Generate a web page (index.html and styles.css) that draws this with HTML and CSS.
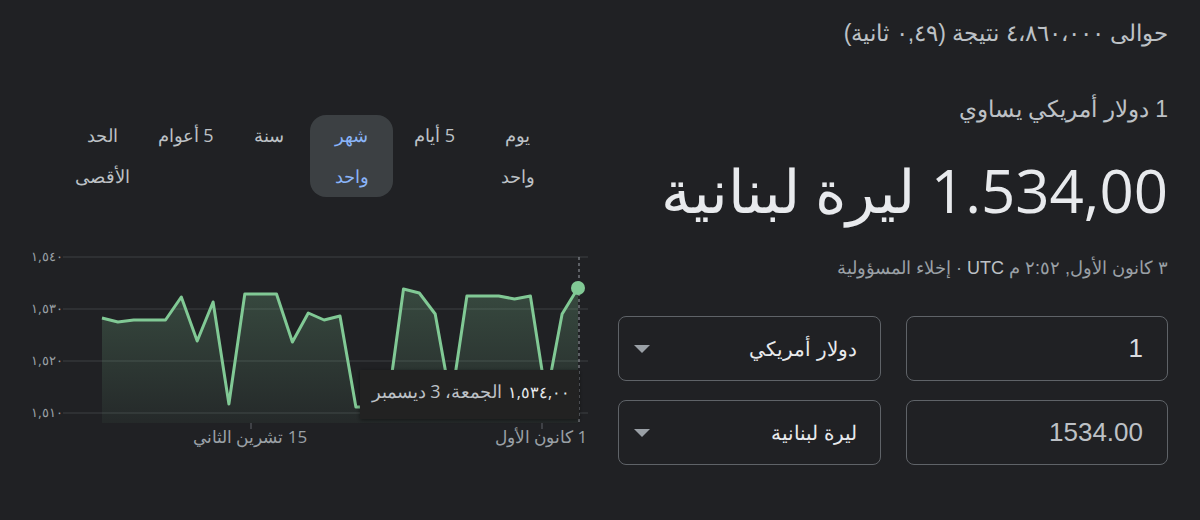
FILE: index.html
```html
<!DOCTYPE html>
<html lang="ar" dir="rtl">
<head>
    <meta charset="utf-8">
    <title>دولار أمريكي إلى ليرة لبنانية</title>
    <link rel="stylesheet" href="styles.css">
</head>
<body>
<div class="page">
    <div class="resultStats">حوالى ٤،٨٦٠،٠٠٠ نتيجة (٠,٤٩ ثانية)</div>

    <div class="mainRow">
        <!-- المحول -->
        <div class="converter">
            <div class="fromLabel">1 دولار أمريكي يساوي</div>
            <div class="toValue">1.534,00 ليرة لبنانية</div>
            <div class="updated">٣ كانون الأول, ٢:٥٢ م <span class="utc">UTC</span> · إخلاء المسؤولية</div>
            <div class="convForm">
                <div class="field amount">1</div>
                <div class="field currency"><span>دولار أمريكي</span><span class="caret"></span></div>
                <div class="field amount dim">1534.00</div>
                <div class="field currency"><span>ليرة لبنانية</span><span class="caret"></span></div>
            </div>
        </div>

        <!-- الرسم البياني -->
        <div class="chartPane">
            <div class="ranges">
                <span class="range">يوم<br>واحد</span>
                <span class="range">5 أيام</span>
                <span class="range on">شهر<br>واحد</span>
                <span class="range">سنة</span>
                <span class="range">5 أعوام</span>
                <span class="range">الحد<br>الأقصى</span>
            </div>

            <svg class="chart" width="570" height="210" viewBox="30 245 570 210">
                <defs>
                    <linearGradient id="areaFill" gradientUnits="userSpaceOnUse" x1="0" y1="288" x2="0" y2="423">
                        <stop offset="0" stop-color="#81c995" stop-opacity="0.24"/>
                        <stop offset="1" stop-color="#81c995" stop-opacity="0.05"/>
                    </linearGradient>
                    <filter id="tipShadow" x="-10%" y="-30%" width="120%" height="160%">
                        <feDropShadow dx="0" dy="1" stdDeviation="2" flood-color="#000" flood-opacity="0.5"/>
                    </filter>
                </defs>

                <g class="grid">
                    <line x1="63" y1="257" x2="588" y2="257"/>
                    <line x1="63" y1="309" x2="588" y2="309"/>
                    <line x1="63" y1="361" x2="588" y2="361"/>
                    <line x1="63" y1="413" x2="588" y2="413"/>
                </g>
                <g class="yLabels">
                    <text x="47" y="261">١,٥٤٠</text>
                    <text x="47" y="313">١,٥٣٠</text>
                    <text x="47" y="365">١,٥٢٠</text>
                    <text x="47" y="417">١,٥١٠</text>
                </g>

                <polygon class="area" points="102,318 117.9,322 133.7,320 149.6,320 165.5,320 181.3,297 197.2,341 213.1,302 228.9,404 244.8,294 260.7,294 276.5,294 292.4,342 308.3,313 324.1,320 340,316 355.9,407 371.7,407 387.6,405 403.5,289 419.3,293 435.2,314 451.1,402 466.9,296 482.8,296 498.7,296 514.5,299 530.4,296 546.3,398 562.1,314 578,288 578,423 102,423"/>
                <polyline class="line" points="102,318 117.9,322 133.7,320 149.6,320 165.5,320 181.3,297 197.2,341 213.1,302 228.9,404 244.8,294 260.7,294 276.5,294 292.4,342 308.3,313 324.1,320 340,316 355.9,407 371.7,407 387.6,405 403.5,289 419.3,293 435.2,314 451.1,402 466.9,296 482.8,296 498.7,296 514.5,299 530.4,296 546.3,398 562.1,314 578,288"/>

                <line class="cursor" x1="579" y1="257" x2="579" y2="423"/>
                <g class="ticks">
                    <line x1="251" y1="423" x2="251" y2="429"/>
                    <line x1="542" y1="423" x2="542" y2="429"/>
                </g>
                <g class="xLabels">
                    <text x="250" y="443">15 تشرين الثاني</text>
                    <text x="541" y="443">1 كانون الأول</text>
                </g>

                <circle class="dot" cx="578" cy="288" r="7"/>

                <g class="tooltip">
                    <rect x="360" y="370" width="219" height="49" filter="url(#tipShadow)"/>
                    <text class="tipValue" x="539" y="398">١,٥٣٤,٠٠</text>
                    <text class="tipDate" x="437" y="398">الجمعة، 3 ديسمبر</text>
                </g>
            </svg>
        </div>
    </div>
</div>
</body>
</html>
```

FILE: styles.css
```css
html, body {
    margin: 0;
}

body {
    background: #202124;
    color: #bdc1c6;
    font-family: "Liberation Sans", Arial, sans-serif;
}

.page {
    width: 1200px;
    height: 520px;
    box-sizing: border-box;
    padding: 20px 32px 0 30px;
    overflow: hidden;
}

.resultStats {
    font-size: 23px;
    line-height: 26px;
}

.mainRow {
    display: flex;
    gap: 18px;
    margin-top: 50px;
}

/* المحول */
.converter {
    flex: none;
    width: 550px;
}

.fromLabel {
    font-size: 23px;
    line-height: 26px;
}

.toValue {
    margin-top: 32px;
    font-family: "Open Sans", "Noto Sans", sans-serif;
    font-size: 60px;
    line-height: 72px;
    color: #e8eaed;
}

.updated {
    margin-top: 32px;
    font-size: 18px;
    line-height: 20px;
    color: #9aa0a6;
}

.updated .utc {
    color: #bdc1c6;
}

.convForm {
    margin-top: 38px;
    display: grid;
    grid-template-columns: 262px 263px;
    gap: 19px 25px;
}

.field {
    height: 65px;
    box-sizing: border-box;
    border: 1px solid #5f6368;
    border-radius: 8px;
    display: flex;
    align-items: center;
}

.amount {
    padding: 0 24px;
    font-size: 26px;
    color: #dadce0;
}

.amount.dim {
    color: #bdc1c6;
}

.currency {
    justify-content: space-between;
    padding: 0 23px 0 15px;
    font-size: 20px;
    color: #e8eaed;
}

.caret {
    width: 0;
    height: 0;
    border-left: 8px solid transparent;
    border-right: 8px solid transparent;
    border-top: 8px solid #9aa0a6;
}

/* الرسم البياني */
.chartPane {
    flex: none;
    width: 570px;
}

.ranges {
    display: flex;
    margin-top: 19px;
    padding-right: 41px;
}

.range {
    width: 83px;
    height: 82px;
    text-align: center;
    font-family: "Open Sans", "Noto Sans", sans-serif;
    font-size: 18px;
    line-height: 41px;
    border-radius: 16px;
}

.range.on {
    background: #3c4043;
    color: #8ab4f8;
}

.chart {
    display: block;
    margin-top: 48px;
}

.chart text {
    text-anchor: middle;
    font-family: "Open Sans", "Noto Sans", sans-serif;
}

.grid line {
    stroke: #3c4043;
    stroke-width: 1;
}

.yLabels text {
    font-size: 13px;
    fill: #9aa0a6;
}

.xLabels text {
    font-size: 17px;
    fill: #9aa0a6;
}

.area {
    fill: url(#areaFill);
}

.line {
    fill: none;
    stroke: #81c995;
    stroke-width: 3;
    stroke-linejoin: round;
}

.cursor {
    stroke: #9aa0a6;
    stroke-width: 1;
    stroke-dasharray: 3 3;
}

.ticks line {
    stroke: #5f6368;
}

.dot {
    fill: #81c995;
}

.tooltip rect {
    fill: #202124;
}

.tipValue {
    font-size: 16px;
    fill: #e8eaed;
}

.tipDate {
    font-size: 18px;
    fill: #bdc1c6;
}
```
